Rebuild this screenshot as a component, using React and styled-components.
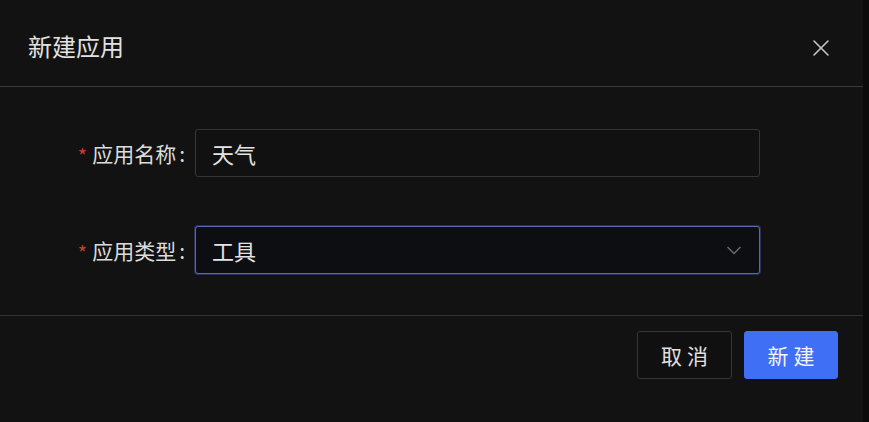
import styled, { createGlobalStyle } from "styled-components";

const GlobalStyle = createGlobalStyle`
  html, body {
    margin: 0;
    padding: 0;
    background: #0b0b0b;
  }
  body {
    font-family: "Noto Sans CJK SC", "Noto Sans", sans-serif;
  }
`;

const Page = styled.div`
  width: 869px;
  height: 422px;
  overflow: hidden;
  display: flex;
`;

const Dialog = styled.div`
  width: 863px;
  height: 422px;
  background: #121212;
  display: flex;
  flex-direction: column;
`;

const Header = styled.div`
  height: 87px;
  flex-shrink: 0;
  display: flex;
  align-items: center;
  justify-content: space-between;
  padding: 0 33px 0 28px;
  border-bottom: 1px solid #3a3a3a;
  box-sizing: border-box;
`;

const Title = styled.h2`
  margin: 0;
  margin-top: 4px;
  font-size: 24px;
  font-weight: 400;
  color: #e2e2e2;
`;

const CloseButton = styled.button`
  width: 18px;
  height: 18px;
  margin-top: 9px;
  padding: 0;
  border: none;
  background: none;
  color: #c4c4c4;
  display: flex;
  align-items: center;
  justify-content: center;
`;

const Body = styled.div`
  height: 229px;
  flex-shrink: 0;
  box-sizing: border-box;
  padding-top: 42px;
  display: flex;
  flex-direction: column;
  gap: 49px;
  border-bottom: 1px solid #333;
`;

const Row = styled.div`
  display: grid;
  grid-template-columns: 195px 565px;
  align-items: center;
`;

const Label = styled.label`
  display: flex;
  justify-content: flex-end;
  align-items: center;
  padding-right: 10px;
  font-size: 21px;
  color: #dcdcdc;
  &::before {
    content: "*";
    color: #c0412e;
    margin-right: 5px;
    margin-top: 4px;
    font-size: 20px;
  }
`;

const Colon = styled.span`
  margin-left: 3px;
`;

const Field = styled.div`
  height: 48px;
  box-sizing: border-box;
  border: 1px solid ${(p) => (p.$focused ? "#5a66b6" : "#363636")};
  box-shadow: ${(p) => (p.$focused ? "0 0 0 1px rgba(70, 84, 170, 0.45)" : "none")};
  background: ${(p) => (p.$focused ? "#0d0e12" : "#111")};
  border-radius: 3px;
  display: flex;
  align-items: center;
  justify-content: space-between;
  padding: 0 17px 0 16px;
  font-size: 22px;
  color: #e4e4e4;
`;

const Chevron = styled.svg`
  width: 16px;
  height: 16px;
  color: #6d6d6d;
`;

const Footer = styled.div`
  display: flex;
  justify-content: flex-end;
  gap: 12px;
  padding: 15px 25px 0 0;
`;

const Button = styled.button`
  width: ${(p) => (p.$primary ? "94px" : "95px")};
  height: 48px;
  border-radius: 3px;
  border: 1px solid ${(p) => (p.$primary ? "#3f6ff5" : "#363636")};
  background: ${(p) => (p.$primary ? "#3f6ff5" : "#101010")};
  color: ${(p) => (p.$primary ? "#f2f4ff" : "#e0e0e0")};
  font-family: inherit;
  font-size: 21px;
  letter-spacing: 5px;
  text-indent: 5px;
  padding: 0;
`;

const App = () => {
  return (
    <Page>
      <GlobalStyle />
      <Dialog>
        <Header>
          <Title>新建应用</Title>
          <CloseButton aria-label="关闭">
            <svg width="18" height="18" viewBox="0 0 18 18" fill="none" stroke="currentColor" strokeWidth="1.6" strokeLinecap="round">
              <path d="M2 2 L16 16 M16 2 L2 16" />
            </svg>
          </CloseButton>
        </Header>
        <Body>
          <Row>
            <Label>应用名称<Colon>:</Colon></Label>
            <Field>天气</Field>
          </Row>
          <Row>
            <Label>应用类型<Colon>:</Colon></Label>
            <Field $focused>
              工具
              <Chevron viewBox="0 0 16 16" fill="none" stroke="currentColor" strokeWidth="1.4">
                <path d="M1.5 5 L8 11.5 L14.5 5" />
              </Chevron>
            </Field>
          </Row>
        </Body>
        <Footer>
          <Button>取消</Button>
          <Button $primary>新建</Button>
        </Footer>
      </Dialog>
    </Page>
  );
};

export default App;
